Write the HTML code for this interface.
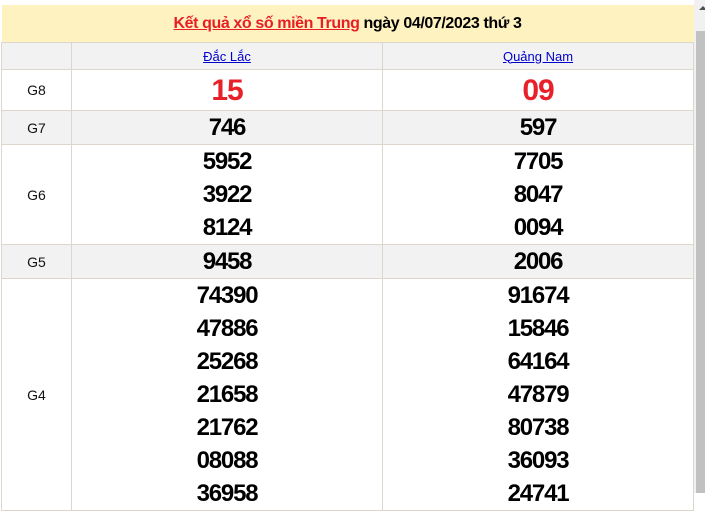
<!DOCTYPE html>
<html><head><meta charset="utf-8"><style>
body{margin:0;width:705px;height:493px;overflow:hidden;background:#fff;font-family:"Liberation Sans",Arial,sans-serif;position:relative}
table{position:absolute;left:1px;top:5px;width:692px;border-collapse:collapse;table-layout:fixed}
td{border:1px solid #ddd6cc;text-align:center;padding:0}
.t{background:#fff2c1;height:37px;font-size:16px;font-weight:bold;color:#000;border:none;border-bottom:1px solid #ddd6cc;letter-spacing:-0.4px}
.t a{color:#e81e25;text-decoration:underline}
.h td{height:26px;background:#f2f2f2;font-size:13px}
.h a{color:#0000cc;text-decoration:underline}
.l{font-size:14px;color:#111}
.n{font-size:24px;font-weight:bold;line-height:33px;letter-spacing:-1.2px}
.r{font-size:30px;color:#e8202a;height:40px;letter-spacing:-1px}
.g td{background:#f2f2f2}
.sb{position:absolute;left:694px;top:0;width:11px;height:493px;background:#f1f1f1}
.th{position:absolute;left:696px;top:31px;width:9px;height:462px;background:#c1c1c1}
.ar{position:absolute;left:699px;top:6px;width:0;height:0;border-left:4px solid transparent;border-right:4px solid transparent;border-bottom:4px solid #505050}
</style></head><body>
<table>
<colgroup><col style="width:70px"><col style="width:311px"><col style="width:311px"></colgroup>
<tr><td class="t" colspan="3"><a>Kết quả xổ số miền Trung</a> ngày 04/07/2023 thứ 3</td></tr>
<tr class="h"><td></td><td><a>Đắc Lắc</a></td><td><a>Quảng Nam</a></td></tr>
<tr><td class="l">G8</td><td class="n r">15</td><td class="n r">09</td></tr>
<tr class="g"><td class="l">G7</td><td class="n">746</td><td class="n">597</td></tr>
<tr><td class="l">G6</td><td class="n">5952<br>3922<br>8124</td><td class="n">7705<br>8047<br>0094</td></tr>
<tr class="g"><td class="l">G5</td><td class="n">9458</td><td class="n">2006</td></tr>
<tr><td class="l">G4</td><td class="n">74390<br>47886<br>25268<br>21658<br>21762<br>08088<br>36958</td><td class="n">91674<br>15846<br>64164<br>47879<br>80738<br>36093<br>24741</td></tr>
</table>
<div class="sb"></div><div class="th"></div><div class="ar"></div>
</body></html>
